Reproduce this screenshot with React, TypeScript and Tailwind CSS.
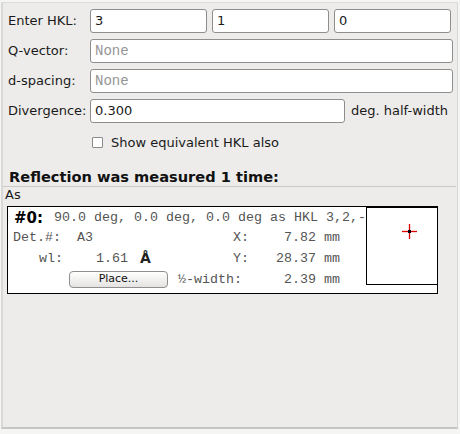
import React from "react";

const sans = "font-['DejaVu_Sans',sans-serif]";
const mono = "font-['Liberation_Mono',monospace]";

function Field({ value, placeholder, className = "" }: { value?: string; placeholder?: string; className?: string }) {
  return (
    <div
      className={`h-[24px] rounded-[3px] border border-[#8e8e8e] bg-white pl-[4px] flex items-center overflow-hidden whitespace-nowrap ${className}`}
    >
      {value !== undefined ? (
        <span className={`${sans} text-[13px] text-[#1a1a1a]`}>{value}</span>
      ) : (
        <span className={`${mono} text-[14px] text-[#959595]`}>{placeholder}</span>
      )}
    </div>
  );
}

function Label({ children }: { children: React.ReactNode }) {
  return <div className={`${sans} text-[13px] text-[#1a1a1a] flex items-center h-[24px] whitespace-nowrap`}>{children}</div>;
}

export default function App() {
  const m = `${mono} text-[13.33px] text-[#555555] whitespace-pre`;
  return (
    <div className="w-[460px] h-[434px] bg-[#f5f5f4] pt-[2px] pl-[1px]">
      <div className="w-[457px] h-[427px] border-l-2 border-t border-r border-l-[#d8d8d6] border-t-[#dcdcdb] border-r-[#d8d8d6] border-b-2 border-b-[#c6c6c5] bg-[#edecea] flex flex-col">
        {/* form */}
        <div className="pt-[6px] pl-[5px] pr-[4px] flex flex-col gap-[6px]">
          <div className="grid grid-cols-[82px_1fr] items-center">
            <Label>Enter HKL:</Label>
            <div className="grid grid-cols-3 gap-[5px] pr-[2px]">
              <Field value="3" />
              <Field value="1" />
              <Field value="0" />
            </div>
          </div>
          <div className="grid grid-cols-[82px_1fr] items-center">
            <Label>Q-vector:</Label>
            <Field placeholder="None" />
          </div>
          <div className="grid grid-cols-[82px_1fr] items-center">
            <Label>d-spacing:</Label>
            <Field placeholder="None" />
          </div>
          <div className="grid grid-cols-[82px_1fr] items-center">
            <Label>Divergence:</Label>
            <div className="flex items-center">
              <Field value="0.300" className="w-[255px]" />
              <span className={`${sans} text-[13px] text-[#1a1a1a] ml-[6px] whitespace-nowrap`}>deg. half-width</span>
            </div>
          </div>
        </div>

        {/* checkbox */}
        <div className="mt-[14px] pl-[89px] flex items-center h-[11px]">
          <div className="w-[11px] h-[11px] border border-[#8a8a8a] rounded-[1px] bg-white" />
          <span className={`${sans} text-[13px] text-[#1a1a1a] ml-[8px] whitespace-nowrap`}>Show equivalent HKL also</span>
        </div>

        {/* header */}
        <div className={`mt-[20px] h-[18px] flex items-center pl-[6px] ${sans} font-bold text-[14.6px] text-[#111] whitespace-nowrap`}>
          Reflection was measured 1 time:
        </div>
        <div className="h-px bg-[#c9c9c8] mr-[1px]" />
        <div className={`h-[16px] flex items-center pl-[2px] ${sans} text-[13px] text-[#1a1a1a]`}>As</div>

        {/* reflection box */}
        <div className="mt-[3px] ml-[4px] w-[431px] h-[88px] border border-black bg-white flex">
          <div className="flex-1 min-w-0 overflow-hidden pt-[1px]">
            <div className="h-[20px] flex items-center pl-[6px]">
              <span className={`${sans} font-bold text-[15px] text-black w-[40px] shrink-0`}>#0:</span>
              <span className={m}>90.0 deg, 0.0 deg, 0.0 deg as HKL 3,2,-</span>
            </div>
            <div className="h-[20px] flex items-center">
              <span className="w-[5px] shrink-0" />
              <span className={`${m} w-[64px] shrink-0`}>Det.#:</span>
              <span className={`${m} w-[156px] shrink-0`}>A3</span>
              <span className={`${m} w-[40px] shrink-0`}>X:</span>
              <span className={`${m} w-[43px] shrink-0 text-right`}>7.82</span>
              <span className={`${m} ml-[8px]`}>mm</span>
            </div>
            <div className="h-[21px] flex items-center">
              <span className="w-[31px] shrink-0" />
              <span className={`${m} w-[57px] shrink-0`}>wl:</span>
              <span className={`${m} w-[44px] shrink-0`}>1.61</span>
              <span className={`${sans} font-bold text-[14px] text-[#222] w-[93px] shrink-0`}>Å</span>
              <span className={`${m} w-[40px] shrink-0`}>Y:</span>
              <span className={`${m} w-[43px] shrink-0 text-right`}>28.37</span>
              <span className={`${m} ml-[8px]`}>mm</span>
            </div>
            <div className="h-[21px] flex items-center">
              <span className="w-[61px] shrink-0" />
              <button
                className={`w-[99px] h-[17px] shrink-0 rounded-[4px] border border-[#8f8f8f] bg-gradient-to-b from-white to-[#e4e3e1] ${sans} text-[11px] text-[#111] flex items-center justify-center`}
              >
                Place...
              </button>
              <span className="w-[10px] shrink-0" />
              <span className={`${m} w-[95px] shrink-0`}>½-width:</span>
              <span className={`${m} w-[43px] shrink-0 text-right`}>2.39</span>
              <span className={`${m} ml-[8px]`}>mm</span>
            </div>
          </div>
          <div className="w-[71px] h-[78px] shrink-0 border-l border-t border-b border-black bg-white">
            <svg width="70" height="76" viewBox="0 0 70 76" className="block">
              <line x1="35" y1="23.5" x2="50" y2="23.5" stroke="#e00000" strokeWidth="1.3" />
              <line x1="42.5" y1="16" x2="42.5" y2="31" stroke="#e00000" strokeWidth="1.3" />
              <rect x="41" y="22" width="3" height="3" fill="#000" />
            </svg>
          </div>
        </div>
      </div>
    </div>
  );
}
